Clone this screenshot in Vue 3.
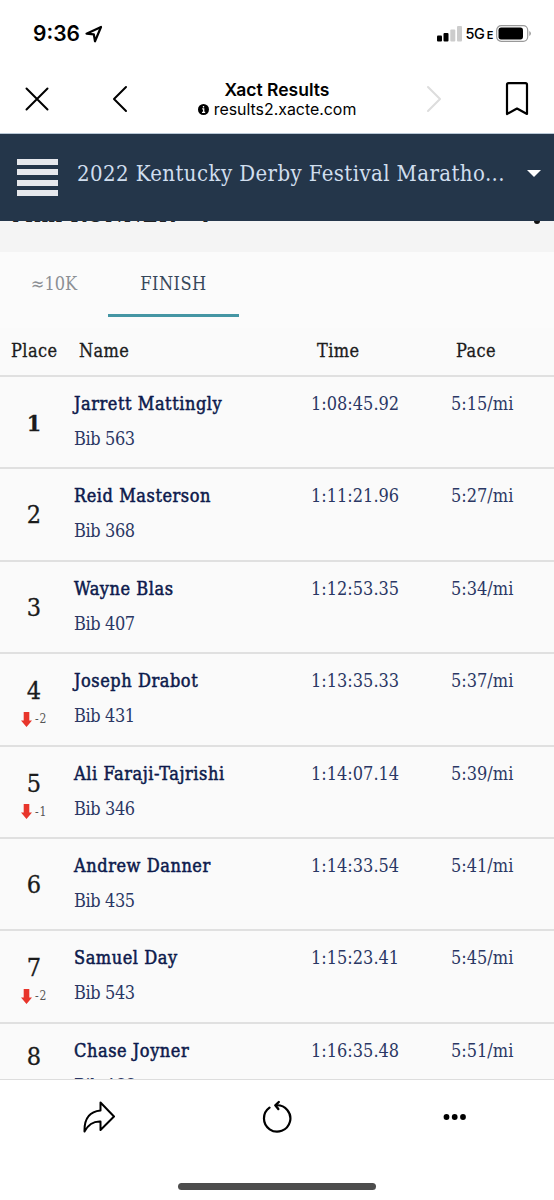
<script setup>
const results = [
    { place: 1, name: 'Jarrett Mattingly', bib: 563, time: '1:08:45.92', pace: '5:15/mi' },
    { place: 2, name: 'Reid Masterson', bib: 368, time: '1:11:21.96', pace: '5:27/mi' },
    { place: 3, name: 'Wayne Blas', bib: 407, time: '1:12:53.35', pace: '5:34/mi' },
    { place: 4, name: 'Joseph Drabot', bib: 431, time: '1:13:35.33', pace: '5:37/mi', change: -2 },
    { place: 5, name: 'Ali Faraji-Tajrishi', bib: 346, time: '1:14:07.14', pace: '5:39/mi', change: -1 },
    { place: 6, name: 'Andrew Danner', bib: 435, time: '1:14:33.54', pace: '5:41/mi' },
    { place: 7, name: 'Samuel Day', bib: 543, time: '1:15:23.41', pace: '5:45/mi', change: -2 },
    { place: 8, name: 'Chase Joyner', bib: 466, time: '1:16:35.48', pace: '5:51/mi' },
]
</script>

<template>
    <div class="screen">
        <!-- Status bar -->
        <div class="status-bar">
            <span class="clock">9:36</span>
            <svg class="location" width="18" height="18" viewBox="0 0 18 18">
                <path d="M1.5 8.7 16 2 10 16.3 8.8 9.3Z" fill="none" stroke="#000" stroke-width="2.2" stroke-linejoin="round" />
            </svg>
            <div class="status-right">
                <svg width="25" height="16" viewBox="0 0 25 16">
                    <rect x="0" y="9.5" width="5" height="6" rx="1" fill="#000" />
                    <rect x="6.5" y="7" width="5" height="8.5" rx="1" fill="#000" />
                    <rect x="13.3" y="3.5" width="5" height="12" rx="1" fill="#ccc" />
                    <rect x="20" y="0" width="5" height="15.5" rx="1" fill="#ccc" />
                </svg>
                <span class="network">5G<small>E</small></span>
                <svg width="35" height="17" viewBox="0 0 35 17">
                    <rect x=".7" y=".7" width="31" height="15.6" rx="4.5" fill="none" stroke="#999" stroke-width="1.2" />
                    <rect x="2.5" y="2.6" width="24.5" height="11.8" rx="2.6" fill="#000" />
                    <path d="M33.3 6v5q1.6-.8 1.6-2.5T33.3 6Z" fill="#999" />
                </svg>
            </div>
        </div>

        <!-- In-app browser header -->
        <div class="browser-bar">
            <svg class="close" width="24" height="24" viewBox="0 0 24 24">
                <path d="M1.5 1.5 22.5 22.5M22.5 1.5 1.5 22.5" fill="none" stroke="#000" stroke-width="2" stroke-linecap="round" />
            </svg>
            <svg class="back" width="16" height="28" viewBox="0 0 16 28">
                <path d="M14 2 2 14 14 26" fill="none" stroke="#000" stroke-width="2" stroke-linecap="round" stroke-linejoin="round" />
            </svg>
            <div class="page-info">
                <div class="page-title">Xact Results</div>
                <div class="page-url">
                    <svg width="11" height="11" viewBox="0 0 11 11">
                        <circle cx="5.5" cy="5.5" r="5.5" fill="#000" />
                        <path d="M4.2 4.8H5.7V8.3M4 8.3H7.2M5.5 2V3.6" fill="none" stroke="#fff" stroke-width="1.3" />
                    </svg>
                    <span>results2.xacte.com</span>
                </div>
            </div>
            <svg class="forward" width="16" height="28" viewBox="0 0 16 28">
                <path d="M2 2 14 14 2 26" fill="none" stroke="#ddd" stroke-width="2" stroke-linecap="round" stroke-linejoin="round" />
            </svg>
            <svg class="bookmark" width="24" height="34" viewBox="0 0 24 34">
                <path d="M3.5 1.2H20.5Q22 1.2 22 2.7V32L12 26.5 2 32V2.7Q2 1.2 3.5 1.2Z" fill="none" stroke="#000" stroke-width="2.2" stroke-linejoin="round" />
            </svg>
        </div>

        <!-- Event header -->
        <div class="event-bar">
            <div class="menu"><i v-for="n in 4" :key="n"></i></div>
            <span class="event-name">2022 Kentucky Derby Festival Maratho...</span>
            <span class="caret"></span>
        </div>

        <!-- Section heading, mostly scrolled under the event header -->
        <div class="section-strip">
            <div class="section-title"><span>Mini RUNNER</span><span class="top">Top</span></div>
            <span class="dot"></span>
        </div>

        <div class="tabs">
            <div class="tab">≈10K</div>
            <div class="tab active">FINISH</div>
        </div>

        <div class="results">
            <div class="row head">
                <span>Place</span><span>Name</span><span>Time</span><span>Pace</span>
            </div>
            <div v-for="r in results" :key="r.place" class="row">
                <div class="place" :class="{ first: r.place === 1, moved: r.change }">
                    <span class="rank">{{ r.place }}</span>
                    <span v-if="r.change" class="change">
                        <svg width="11" height="15" viewBox="0 0 11 15">
                            <path d="M2.7 0H8.3V8.5H11L5.5 15 0 8.5H2.7Z" fill="#e8352b" />
                        </svg>{{ r.change }}
                    </span>
                </div>
                <div class="runner">
                    <div class="name">{{ r.name }}</div>
                    <div class="bib">Bib {{ r.bib }}</div>
                </div>
                <div class="time">{{ r.time }}</div>
                <div class="pace">{{ r.pace }}</div>
            </div>
        </div>

        <!-- Bottom toolbar -->
        <div class="toolbar">
            <svg width="32" height="32" viewBox="0 0 32 32">
                <path d="M17.5 1.5 31 15.5 17.5 29V20.5Q7 20 1.5 30.5 1 11 17.5 9.5Z" fill="none" stroke="#000" stroke-width="2" stroke-linejoin="round" />
            </svg>
            <svg width="32" height="34" viewBox="0 0 32 34">
                <path d="M8.5 7.7A13.2 13.2 0 1 0 15 5.3" fill="none" stroke="#000" stroke-width="2.2" stroke-linecap="round" />
                <path d="M17.8 2 14.3 5.3 17.3 9" fill="none" stroke="#000" stroke-width="2.4" stroke-linecap="round" stroke-linejoin="round" />
            </svg>
            <svg width="24" height="6" viewBox="0 0 24 6">
                <circle cx="3.5" cy="3" r="2.9" /><circle cx="11.7" cy="3" r="2.9" /><circle cx="20" cy="3" r="2.9" />
            </svg>
        </div>
        <div class="home-indicator"></div>
    </div>
</template>

<style>
body { margin: 0; background: #fff; }
</style>

<style scoped>
.screen {
    width: 554px; height: 1200px; overflow: hidden;
    display: flex; flex-direction: column;
    background: #fff; color: #000;
    font-family: "DejaVu Serif Condensed", "DejaVu Serif", serif;
    font-stretch: condensed;
}
.screen > * { flex-shrink: 0; box-sizing: border-box; }
svg { display: block; flex-shrink: 0; }

.status-bar { height: 67px; display: flex; align-items: center; padding: 0 23px 0 33px; font-family: Inter, sans-serif; }
.clock { font-size: 21px; font-weight: 600; }
.location { margin-left: 5px; }
.status-right { margin-left: auto; display: flex; align-items: center; gap: 3px; }
.network { font-size: 14.5px; font-weight: 500; letter-spacing: -0.3px; }
.network small { font-size: 11px; font-weight: 600; margin-left: 2px; }

.browser-bar { height: 67px; display: flex; align-items: center; padding: 0 25px 2px; font-family: Inter, sans-serif; border-bottom: 1px solid #b9c8d6; }
.back { margin-left: 63px; }
.page-info { flex: 1; text-align: center; padding-top: 1px; }
.page-title { font-size: 17.5px; font-weight: 600; line-height: 20px; }
.page-url { display: flex; align-items: center; justify-content: center; gap: 5px; font-size: 15.9px; line-height: 20px; }
.forward { margin-right: 63px; }

.event-bar { height: 87px; display: flex; align-items: center; padding: 0 13px 9px 17px; background: #24364a; color: #d0deee; }
.menu { display: flex; flex-direction: column; gap: 4.3px; padding-top: 9px; }
.menu i { width: 41px; height: 6px; background: #e6e8ed; }
.event-name { margin-left: 19px; font-size: 22px; letter-spacing: 0.4px; white-space: nowrap; }
.caret { margin-left: auto; border: 7px solid transparent; border-top-color: #fff; border-bottom: 0; }

.section-strip { height: 31px; position: relative; overflow: hidden; background: #f4f4f4; }
.section-title { display: flex; gap: 10px; margin: -21px 0 0 12px; font-size: 23px; line-height: 28px; letter-spacing: 0.8px; color: #222; }
.top { font-size: 17px; line-height: 24px; letter-spacing: 0; }
.dot { position: absolute; right: 14px; top: -3px; width: 6px; height: 6px; border-radius: 50%; background: #111; }

.tabs { height: 76px; display: flex; background: #fbfbfb; }
.tab { width: 108px; height: 65px; box-sizing: border-box; text-align: center; font-size: 18px; line-height: 64px; color: #8b8f94; }
.tab.active { width: 131px; letter-spacing: 0.5px; color: #36475a; border-bottom: 3px solid #4596a4; }

.results { height: 752px; overflow: hidden; background: #fafafa; border-bottom: 1px solid #ddd; }
.row { display: grid; grid-template-columns: 74px 237px 140px 1fr; height: 92.4px; box-sizing: border-box; border-bottom: 2px solid #e0e0e0; font-size: 18px; line-height: 35px; color: #2a3764; }
.row.head { height: 49px; line-height: 46px; padding-left: 11px; grid-template-columns: 68px 238px 139px 1fr; letter-spacing: 0.4px; color: #1c1c1c; -webkit-text-stroke: 0.3px #1c1c1c; }
.place { width: 68px; text-align: center; color: #1b1b1b; padding-top: 28px; }
.rank { display: block; font-size: 25px; line-height: 35px; -webkit-text-stroke: 0.3px #1b1b1b; }
.first .rank { font-size: 23px; font-weight: bold; }
.place.moved { padding-top: 19px; }
.row:last-child .place { padding-top: 15px; }
.change { display: flex; justify-content: center; align-items: center; gap: 3px; font-size: 12px; line-height: 22px; letter-spacing: 0.8px; color: #555; }
.runner, .time, .pace { padding-top: 9px; white-space: nowrap; }
.name { color: #0d1a4c; letter-spacing: 0.55px; -webkit-text-stroke: 0.5px #0d1a4c; }
.bib { letter-spacing: -0.4px; }

.toolbar { height: 75px; display: grid; grid-template-columns: 1fr 1fr 1fr; align-items: center; justify-items: center; padding: 0 10px 1px; background: #fff; }
.home-indicator { width: 198px; height: 7px; margin: 28px auto 0; border-radius: 4px; background: #4d4d4d; }
</style>
